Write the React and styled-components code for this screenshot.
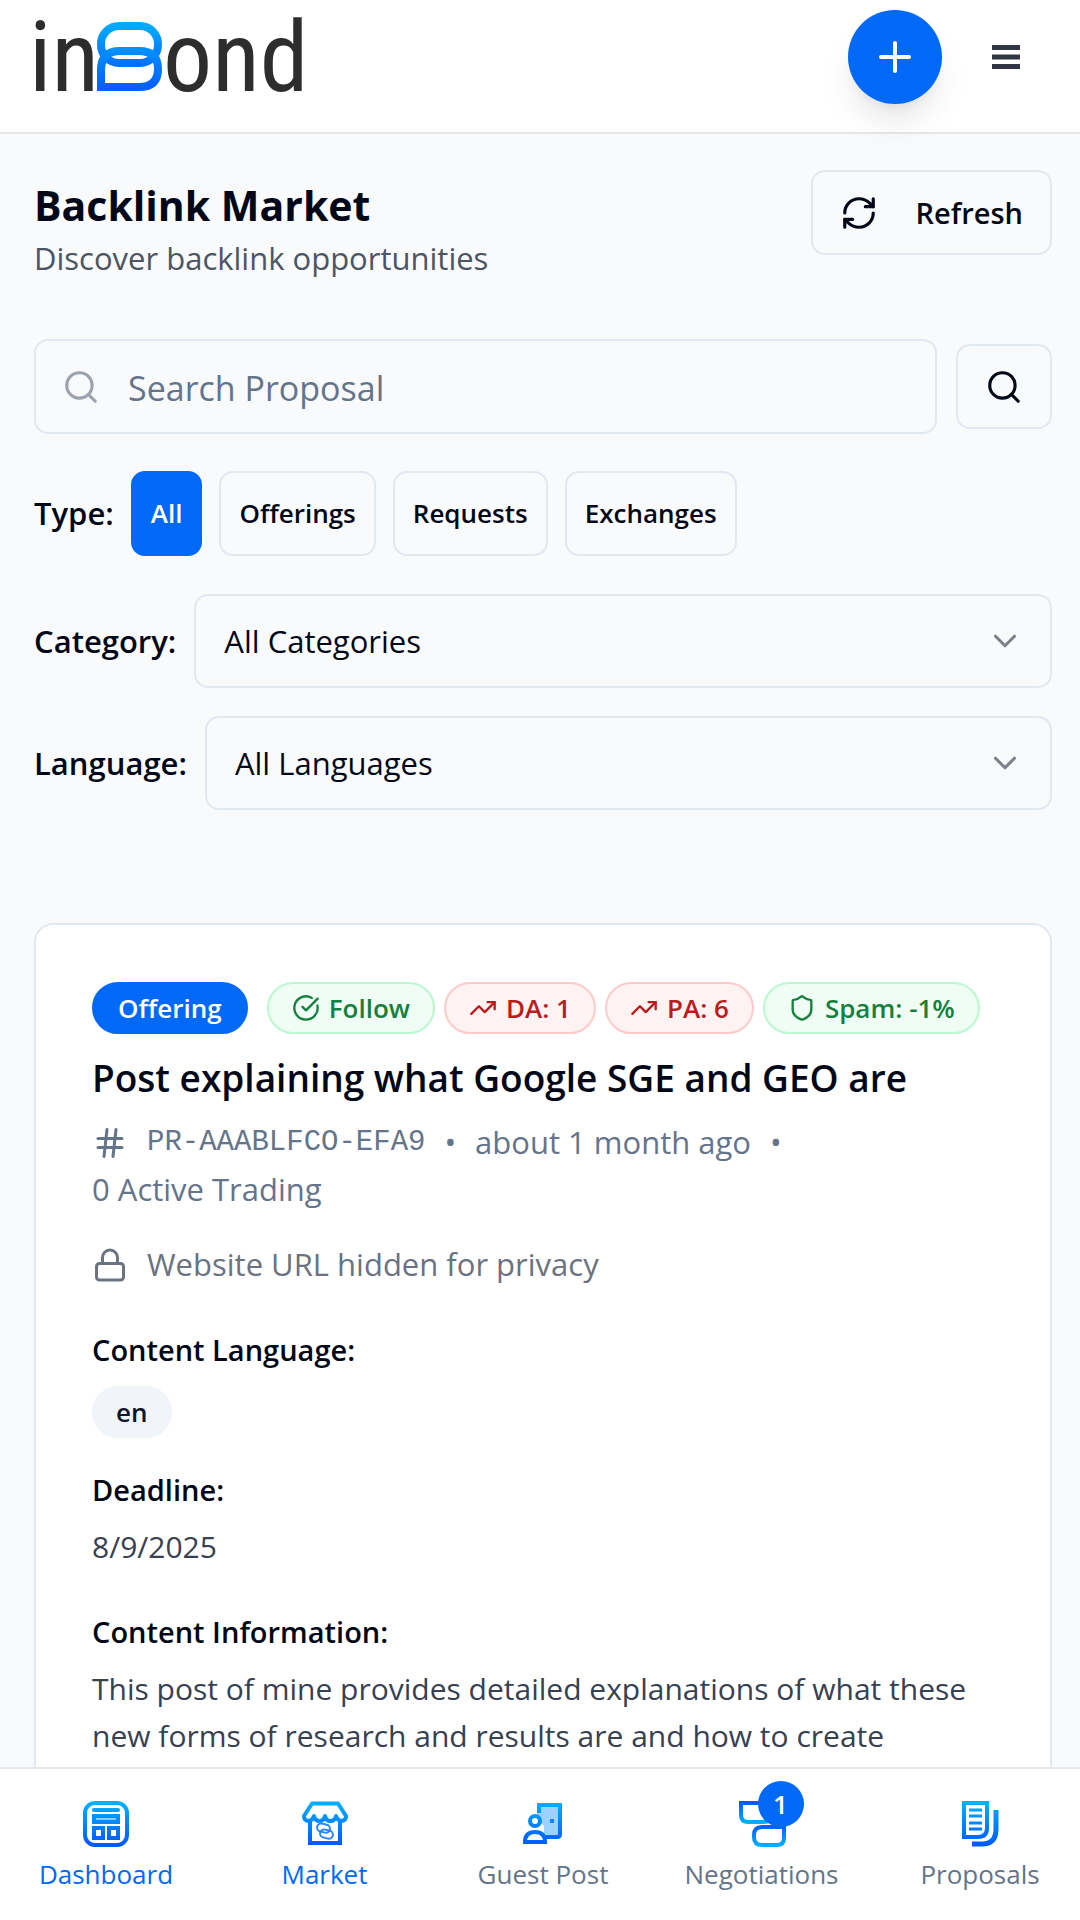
import React from 'react'
import styled, { createGlobalStyle } from 'styled-components'
import {
  RefreshCw,
  Search,
  ChevronDown,
  Hash,
  Lock,
  Plus,
  Shield,
  TrendingUp,
  CircleCheckBig,
} from 'lucide-react'

const GlobalStyle = createGlobalStyle`
  * {
    box-sizing: border-box;
  }
  body {
    margin: 0;
    background: #f9fafc;
    color: #020817;
    font-family: "Open Sans", "Noto Sans", sans-serif;
    font-size: 31px;
    line-height: 47px;
  }
  button, input, select {
    font: inherit;
    color: inherit;
    margin: 0;
  }
  h1, h2, h3, p {
    margin: 0;
  }
`;

const Page = styled.div`
  display: flex;
  flex-direction: column;
  height: 100vh;
`;

const Header = styled.header`
  position: relative;
  z-index: 1;
  display: flex;
  align-items: flex-start;
  justify-content: space-between;
  flex-shrink: 0;
  height: 134px;
  padding: 0 54px 0 28px;
  background: #fff;
  border-bottom: 2px solid #e5e7eb;
`;

const LogoLink = styled.a`
  display: flex;
  color: #2d2d2d;
`;

const HeaderActions = styled.div`
  display: flex;
  align-items: center;
  gap: 44px;
  padding-top: 10px;
`;

const AddButton = styled.button`
  display: flex;
  align-items: center;
  justify-content: center;
  width: 94px;
  height: 94px;
  padding: 0;
  border: none;
  border-radius: 50%;
  background: #0069f8;
  color: #fff;
  box-shadow: 0 22px 34px -6px rgba(0, 0, 0, 0.1), 0 8px 14px -8px rgba(0, 0, 0, 0.1);
  cursor: pointer;
`;

const MenuButton = styled.button`
  display: flex;
  padding: 5px;
  border: none;
  background: none;
  color: #323643;
  cursor: pointer;
`;

const Main = styled.main`
  flex: 1;
  min-height: 0;
  overflow-y: auto;
  scrollbar-width: none;
  padding: 36px 28px 0 34px;
`;

const TitleRow = styled.div`
  display: flex;
  justify-content: space-between;
  align-items: flex-start;
  margin-bottom: 57px;
`;

const Heading = styled.h1`
  margin-top: 6px;
  font-size: 41px;
  line-height: 59px;
  font-weight: 700;
`;

const Subtitle = styled.p`
  color: #4b5563;
`;

const OutlineButton = styled.button`
  display: flex;
  align-items: center;
  justify-content: center;
  gap: 38px;
  height: 85px;
  padding: 0 ${props => props.$pad || 27}px;
  border: 2px solid ${props => props.$active ? '#0069f8' : '#e2e8f0'};
  border-radius: 14px;
  background: ${props => props.$active ? '#0069f8' : '#f9fafc'};
  color: ${props => props.$active ? '#fff' : '#020817'};
  font-size: ${props => props.$small ? 26 : 29}px;
  font-weight: 600;
  cursor: pointer;
`;

const SearchRow = styled.div`
  display: flex;
  align-items: center;
  gap: 19px;
  margin-bottom: 37px;
`;

const SearchField = styled.label`
  display: flex;
  align-items: center;
  flex: 1;
  gap: 28px;
  height: 95px;
  padding: 0 26px;
  border: 2px solid #e2e8f0;
  border-radius: 14px;
  color: #9ca3af;
`;

const SearchInput = styled.input`
  flex: 1;
  min-width: 0;
  padding: 4px 0 0;
  border: none;
  outline: none;
  background: none;
  color: #020817;
  font-size: 34px;
  &::placeholder {
    color: #64748b;
    opacity: 1;
  }
`;

const TypeRow = styled.div`
  display: flex;
  align-items: center;
  gap: 17px;
  margin-bottom: 38px;
`;

const Label = styled.label`
  font-weight: 600;
`;

const FilterRow = styled.div`
  display: flex;
  align-items: center;
  gap: 18px;
  margin-bottom: 28px;
`;

const SelectWrap = styled.div`
  position: relative;
  flex: 1;
  color: #7d8189;
  svg {
    position: absolute;
    right: 28px;
    top: 28px;
    pointer-events: none;
  }
`;

const Select = styled.select`
  width: 100%;
  height: 94px;
  padding: 0 28px;
  appearance: none;
  border: 2px solid #e2e8f0;
  border-radius: 14px;
  background: #f9fafc;
  color: #020817;
`;

const Card = styled.article`
  margin-top: 113px;
  padding: 57px 56px;
  border: 2px solid #e2e8f0;
  border-radius: 19px;
  background: #fff;
`;

const Badges = styled.div`
  display: flex;
  gap: 9px;
`;

const tones = {
  primary: { bg: '#0069f8', border: '#0069f8', text: '#fff', pad: 24 },
  green: { bg: '#f0fdf4', border: '#bbf7d0', text: '#15803d', pad: 23 },
  red: { bg: '#fef2f2', border: '#fecaca', text: '#b91c1c', pad: 23 },
  gray: { bg: '#f1f5f9', border: '#f1f5f9', text: '#0f172a', pad: 22 },
}

const Badge = styled.span`
  display: inline-flex;
  align-items: center;
  gap: 9px;
  height: 52px;
  padding: 0 ${props => tones[props.$tone].pad}px;
  border: 2px solid ${props => tones[props.$tone].border};
  border-radius: 26px;
  background: ${props => tones[props.$tone].bg};
  color: ${props => tones[props.$tone].text};
  font-size: 26px;
  font-weight: 600;
  white-space: nowrap;
  margin-right: ${props => props.$tone === 'primary' ? 10 : 0}px;
`;

const PostTitle = styled.h2`
  margin-top: 16px;
  font-size: 37px;
  line-height: 56px;
  font-weight: 600;
`;

const Meta = styled.div`
  display: flex;
  flex-wrap: wrap;
  align-items: center;
  column-gap: 19px;
  margin-top: 13px;
  color: #64748b;
`;

const Code = styled.span`
  font-family: "Liberation Mono", monospace;
  font-size: 29px;
`;

const Privacy = styled.div`
  display: flex;
  align-items: center;
  gap: 19px;
  margin-top: 28px;
  color: #6b7280;
`;

const Section = styled.section`
  display: flex;
  flex-direction: column;
  align-items: flex-start;
  gap: ${props => props.$gap || 10}px;
  margin-top: ${props => props.$top || 28}px;
`;

const SectionTitle = styled.h3`
  font-size: 29px;
  font-weight: 600;
`;

const SectionText = styled.p`
  color: #374151;
  font-size: 30px;
`;

const Nav = styled.nav`
  display: flex;
  justify-content: space-between;
  flex-shrink: 0;
  height: 153px;
  padding: 31px 22px 0 28px;
  background: #fff;
  border-top: 2px solid #e5e7eb;
`;

const NavItem = styled.a`
  position: relative;
  display: flex;
  flex-direction: column;
  align-items: center;
  width: 156px;
  gap: 5px;
  color: ${props => props.$active ? '#0069f8' : '#64748b'};
  font-size: 26px;
  line-height: 42px;
  white-space: nowrap;
  text-decoration: none;
`;

const Count = styled.span`
  position: absolute;
  top: -19px;
  right: 36px;
  width: 46px;
  height: 46px;
  border-radius: 50%;
  background: #0069f8;
  color: #fff;
  font-size: 26px;
  line-height: 46px;
  font-weight: 600;
  text-align: center;
`;

function Logo() {
  return (
    <svg width="290" height="120" viewBox="-10 -9 290 120" role="img" aria-label="inBond">
      <defs>
        <linearGradient id="logoBlue" x1="0" y1="0" x2="0" y2="1">
          <stop offset="0" stopColor="#00aaff" />
          <stop offset="1" stopColor="#0072ff" />
        </linearGradient>
        <linearGradient id="logoBlueLow" x1="0" y1="0" x2="0" y2="1">
          <stop offset="0" stopColor="#0090ff" />
          <stop offset="1" stopColor="#0060ff" />
        </linearGradient>
      </defs>
      <g fill="#2d2d2d" fontFamily="Roboto Condensed, Roboto, sans-serif" fontSize="98">
        <text x="-9" y="82">in</text>
        <text x="125" y="82">ond</text>
      </g>
      <rect x="63" y="17" width="57" height="37" rx="18" fill="none" stroke="url(#logoBlue)" strokeWidth="8" />
      <path d="M63 78V61q0-19 19-19h19q19 0 19 18t-19 18Z" fill="none" stroke="url(#logoBlueLow)" strokeWidth="8" />
    </svg>
  )
}

function NavIcon({ name }) {
  const id = 'nav-' + name.replace(' ', '')
  const up = name === 'Negotiations'
  const stroke = { fill: 'none', stroke: `url(#${id})`, strokeWidth: 4 }
  return (
    <svg width="48" height="48" viewBox="0 0 48 48" aria-hidden="true">
      <defs>
        <linearGradient id={id} gradientUnits="userSpaceOnUse" x1="0" y1={up ? 24 : 1} x2="0" y2={up ? 1 : 47} spreadMethod={up ? 'repeat' : 'pad'}>
          <stop offset="0" stopColor="#00b4ff" />
          <stop offset="1" stopColor="#0055ff" />
        </linearGradient>
      </defs>
      {name === 'Dashboard' && (
        <g {...stroke}>
          <rect x="3" y="3" width="42" height="42" rx="10" />
          <rect x="12" y="16" width="24" height="6" fill="#8cc8ff" />
          <rect x="12" y="28" width="9" height="10" />
          <rect x="27" y="28" width="9" height="10" />
          <rect x="10" y="8" width="28" height="4" rx="2" fill={`url(#${id})`} stroke="none" />
        </g>
      )}
      {name === 'Market' && (
        <g {...stroke}>
          <path d="M11 3.500H37L45 16q0 5-5 5-4-1-5-5-1 5-5.500 5t-5.500-5q-1 5-5.500 5t-5.500-5q-1 4-5 5-5 0-5-5Z" strokeLinejoin="round" />
          <path d="M9 21V43H39V21" />
          <g strokeWidth="2" stroke="#2a86ff">
            <rect x="16" y="24" width="13" height="8" rx="4" transform="rotate(14 22 28)" />
            <rect x="19" y="30" width="13" height="8" rx="4" transform="rotate(14 25 34)" />
          </g>
        </g>
      )}
      {name === 'Guest Post' && (
        <g {...stroke}>
          <path d="M18 6h22v31H25V26l-7-8Z" fill="#9bd2ff" stroke="none" />
          <path d="M20 13V5H41V34q0 3-3 3H27" />
          <circle cx="16" cy="21" r="5" fill="#fff" />
          <path d="M6 42q0-10 10-10t10 10Z" fill="#fff" />
          <rect x="31" y="19" width="4" height="4" fill="#0088ff" stroke="none" />
        </g>
      )}
      {name === 'Negotiations' && (
        <g {...stroke}>
          <path d="M3 3H32V16q0 6-6 6H10q-7 0-7-7Z" />
          <path d="M46 27V38q0 7-7 7H24q-8 0-8-8v-2q0-8 8-8Z" />
        </g>
      )}
      {name === 'Proposals' && (
        <g {...stroke}>
          <path d="M8 3H31V28q0 9-9 9H8Z" />
          <path d="M40 10V29q0 15-14 15H16" strokeWidth="5" />
          <path d="M13 10H26M13 16H26M13 23H26M13 29H26" strokeWidth="3" />
        </g>
      )}
    </svg>
  )
}

const types = ['All', 'Offerings', 'Requests', 'Exchanges']

const navItems = [
  { name: 'Dashboard', active: true },
  { name: 'Market', active: true },
  { name: 'Guest Post' },
  { name: 'Negotiations', count: 1 },
  { name: 'Proposals' },
]

function Filter({ id, label, option }) {
  return (
    <FilterRow>
      <Label htmlFor={id}>{label}:</Label>
      <SelectWrap>
        <Select id={id}>
          <option>{option}</option>
        </Select>
        <ChevronDown size={38} />
      </SelectWrap>
    </FilterRow>
  )
}

export default function App() {
  const [type, setType] = React.useState('All')

  return (
    <Page>
      <GlobalStyle />
      <Header>
        <LogoLink href="#home"><Logo /></LogoLink>
        <HeaderActions>
          <AddButton aria-label="New proposal"><Plus size={48} /></AddButton>
          <MenuButton aria-label="Menu">
            <svg width="30" height="26" viewBox="0 0 30 26">
              <path d="M1 3.500H29M1 13H29M1 22.500H29" stroke="currentColor" strokeWidth="5" />
            </svg>
          </MenuButton>
        </HeaderActions>
      </Header>

      <Main>
        <TitleRow>
          <div>
            <Heading>Backlink Market</Heading>
            <Subtitle>Discover backlink opportunities</Subtitle>
          </div>
          <OutlineButton><RefreshCw size={38} />Refresh</OutlineButton>
        </TitleRow>

        <SearchRow>
          <SearchField>
            <Search size={38} />
            <SearchInput type="text" placeholder="Search Proposal" aria-label="Search Proposal" />
          </SearchField>
          <OutlineButton aria-label="Search"><Search size={38} /></OutlineButton>
        </SearchRow>

        <TypeRow>
          <Label as="span">Type:</Label>
          {types.map(t => (
            <OutlineButton key={t} $small $pad={18} $active={t === type} onClick={() => setType(t)}>{t}</OutlineButton>
          ))}
        </TypeRow>

        <Filter id="category" label="Category" option="All Categories" />
        <Filter id="language" label="Language" option="All Languages" />

        <Card>
          <Badges>
            <Badge $tone="primary">Offering</Badge>
            <Badge $tone="green"><CircleCheckBig size={28} />Follow</Badge>
            <Badge $tone="red"><TrendingUp size={28} />DA: 1</Badge>
            <Badge $tone="red"><TrendingUp size={28} />PA: 6</Badge>
            <Badge $tone="green"><Shield size={28} />Spam: -1%</Badge>
          </Badges>
          <PostTitle>Post explaining what Google SGE and GEO are</PostTitle>
          <Meta>
            <Hash size={36} />
            <Code>PR-AAABLFCO-EFA9</Code>
            <span>•</span>
            <span>about 1 month ago</span>
            <span>•</span>
            <span>0 Active Trading</span>
          </Meta>
          <Privacy><Lock size={36} />Website URL hidden for privacy</Privacy>

          <Section $top={38} $gap={13}>
            <SectionTitle>Content Language:</SectionTitle>
            <Badge $tone="gray">en</Badge>
          </Section>
          <Section>
            <SectionTitle>Deadline:</SectionTitle>
            <SectionText>8/9/2025</SectionText>
          </Section>
          <Section $top={38}>
            <SectionTitle>Content Information:</SectionTitle>
            <SectionText>
              This post of mine provides detailed explanations of what these new forms of research and results are and how to create
            </SectionText>
          </Section>
        </Card>
      </Main>

      <Nav>
        {navItems.map(item => (
          <NavItem key={item.name} href={'#' + item.name} $active={item.active}>
            <NavIcon name={item.name} />
            {item.name}
            {item.count && <Count>{item.count}</Count>}
          </NavItem>
        ))}
      </Nav>
    </Page>
  )
}
